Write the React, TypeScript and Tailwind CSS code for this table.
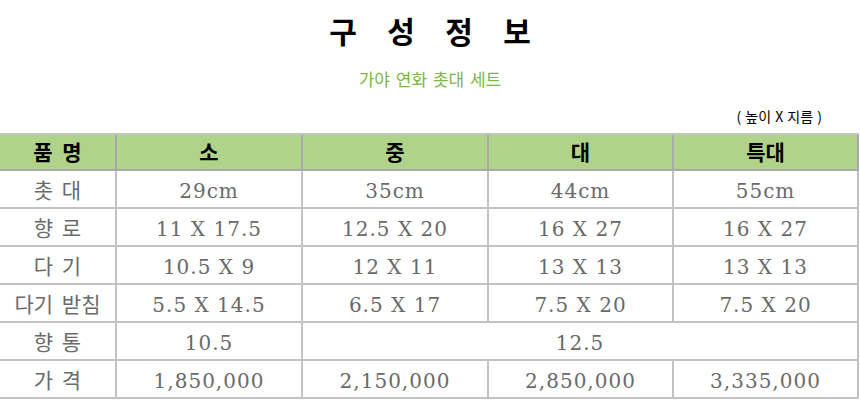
import React from "react";

type Cell = { t: string; span?: number };

const rows: { label: string; cells: Cell[] }[] = [
  { label: "촛 대", cells: [{ t: "29cm" }, { t: "35cm" }, { t: "44cm" }, { t: "55cm" }] },
  { label: "향 로", cells: [{ t: "11 X 17.5" }, { t: "12.5 X 20" }, { t: "16 X 27" }, { t: "16 X 27" }] },
  { label: "다 기", cells: [{ t: "10.5 X 9" }, { t: "12 X 11" }, { t: "13 X 13" }, { t: "13 X 13" }] },
  { label: "다기 받침", cells: [{ t: "5.5 X 14.5" }, { t: "6.5 X 17" }, { t: "7.5 X 20" }, { t: "7.5 X 20" }] },
  { label: "향 통", cells: [{ t: "10.5" }, { t: "12.5", span: 3 }] },
  { label: "가 격", cells: [{ t: "1,850,000" }, { t: "2,150,000" }, { t: "2,850,000" }, { t: "3,335,000" }] },
];

export default function App() {
  return (
    <div className="w-[860px] h-[400px] bg-white overflow-hidden font-['Noto_Sans_CJK_KR','Noto_Sans',sans-serif]">
      <div className="pt-[12px] flex justify-center text-[30px] leading-[36px] font-bold text-black">
        {["구", "성", "정", "보"].map((c) => (
          <span key={c} className="w-[58px] text-center">{c}</span>
        ))}
      </div>
      <div className="mt-[21px] text-center text-[17px] leading-[20px] text-[#7ab648] [word-spacing:2px]">
        가야 연화 촛대 세트
      </div>
      <div className="mt-[19px] flex justify-end pr-[38px] text-[14px] leading-[16px] text-black [word-spacing:1px]">
        ( 높이 X 지름 )
      </div>
      <div className="mt-[9px] w-[859px] grid grid-cols-[117px_186px_186px_185px_185px] border-t-2 border-[#c4c4c4]">
        {["품 명", "소", "중", "대", "특대"].map((h) => (
          <div
            key={h}
            className="h-[36px] flex items-center justify-center bg-[#afd388] border-b-2 border-r-2 border-[#a9a9a9] text-[21px] font-bold text-black [word-spacing:5px]"
          >
            {h}
          </div>
        ))}
        {rows.map((r) => (
          <React.Fragment key={r.label}>
            <div className="h-[38px] pt-[2px] flex items-center justify-center border-b-2 border-r-2 border-[#c2c2c2] text-[21px] text-[#6a6a6a] whitespace-nowrap [word-spacing:4px]">
              {r.label}
            </div>
            {r.cells.map((c, j) => (
              <div
                key={j}
                className={
                  c.span === 3
                    ? "col-span-3 h-[38px] pt-[4px] flex items-center justify-center border-b-2 border-r-2 border-[#c2c2c2] text-[20px] tracking-[1px] text-[#6a6a6a] font-['DejaVu_Serif','Liberation_Serif',serif]"
                    : "h-[38px] pt-[4px] flex items-center justify-center border-b-2 border-r-2 border-[#c2c2c2] text-[20px] tracking-[1px] text-[#6a6a6a] font-['DejaVu_Serif','Liberation_Serif',serif]"
                }
              >
                {c.t}
              </div>
            ))}
          </React.Fragment>
        ))}
      </div>
    </div>
  );
}
